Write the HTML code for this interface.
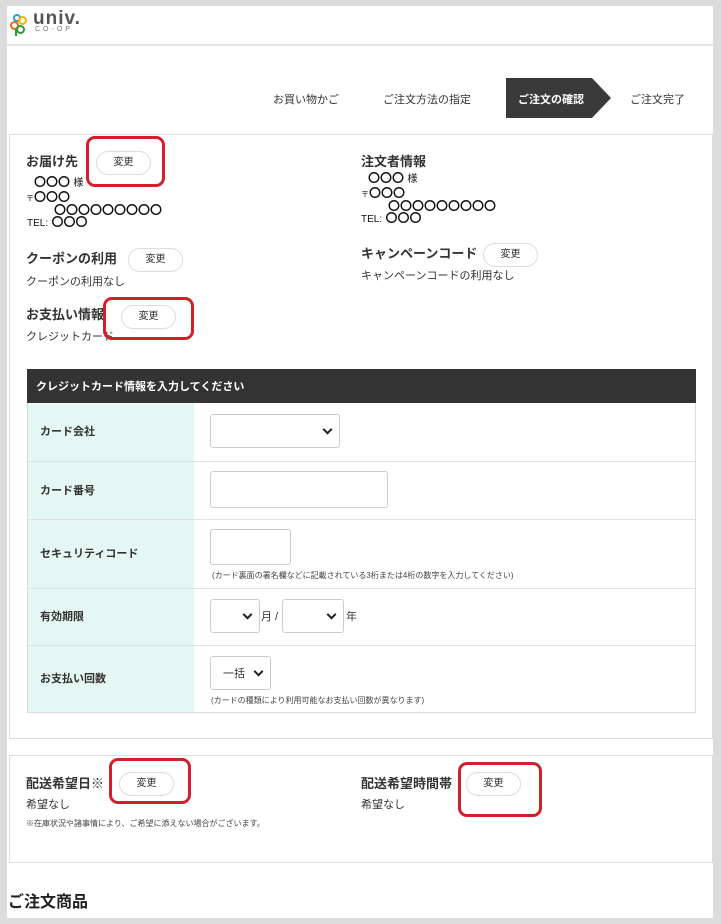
<!DOCTYPE html>
<html><head><meta charset="utf-8"><style>
*{margin:0;padding:0;box-sizing:border-box}
body{width:721px;height:924px;background:#dcdcdc;position:relative;overflow:hidden;font-family:"Liberation Sans","Noto Sans CJK JP",sans-serif;color:#333}
.a{position:absolute}
.page{left:7px;top:6px;width:706px;height:912px;background:#fff}
.b{font-weight:bold;font-size:13px;color:#333}
.t{font-size:11px;color:#333}
.btn{position:absolute;width:55px;height:24px;border:1px solid #ddd;border-radius:12px;background:#fff;font-size:10px;text-align:center;line-height:22px;color:#333}
.red{position:absolute;border:3px solid #d1202b;border-radius:9px}
.o{font-weight:bold;font-size:12px;line-height:12px;letter-spacing:0;color:#111}
.lab{position:absolute;left:28px;width:166px;background:#e4f7f3;font-size:11px;font-weight:bold;padding-left:12px;padding-bottom:2px;display:flex;align-items:center}
.row{position:absolute;left:28px;width:667px;border-top:1px solid #e2e2e2}
.in{position:absolute;border:1px solid #ccc;border-radius:3px;background:#fff}
.sel::after{content:"";position:absolute;right:8px;top:50%;width:5px;height:5px;border-right:2px solid #222;border-bottom:2px solid #222;transform:translateY(-70%) rotate(45deg)}
.note{position:absolute;font-size:8px;color:#444}
</style></head><body>
<div class="a page"></div>
<!-- logo -->
<div class="a" style="left:13px;top:14px;width:8px;height:8px;border:2px solid #2aa0d8;border-radius:50%"></div>
<div class="a" style="left:18px;top:16px;width:9px;height:9px;border:2px solid #f0b400;border-radius:50%"></div>
<div class="a" style="left:10px;top:21px;width:9px;height:9px;border:2px solid #e86a1c;border-radius:50%"></div>
<div class="a" style="left:16px;top:25px;width:9px;height:9px;border:2px solid #2e9a3c;border-radius:50%"></div>
<div class="a" style="left:15px;top:29px;width:2px;height:7px;background:#2e9a3c"></div>
<div class="a" style="left:33px;top:9px;font-size:19px;font-weight:bold;color:#555;letter-spacing:1px;line-height:19px">univ.</div>
<div class="a" style="left:35px;top:26px;font-size:7px;color:#777;letter-spacing:3px;line-height:8px">CO-OP</div>
<div class="a" style="left:7px;top:44px;width:706px;height:2px;background:#e6e6e6"></div>
<!-- steps -->
<div class="a t" style="left:273px;top:91px">お買い物かご</div>
<div class="a t" style="left:383px;top:91px">ご注文方法の指定</div>
<div class="a" style="left:506px;top:78px;width:86px;height:40px;background:#3a3a3a"></div>
<div class="a" style="left:592px;top:78px;width:0;height:0;border-top:20px solid transparent;border-bottom:20px solid transparent;border-left:19px solid #3a3a3a"></div>
<div class="a" style="left:518px;top:91px;font-size:11px;font-weight:bold;color:#fff">ご注文の確認</div>
<div class="a t" style="left:630px;top:91px">ご注文完了</div>
<!-- section 1 -->
<div class="a" style="left:9px;top:134px;width:704px;height:605px;border:1px solid #ddd"></div>
<div class="a b" style="left:26px;top:151px">お届け先</div>
<div class="btn" style="left:96px;top:151px">変更</div>
<div class="a o" style="left:34px;top:176px">〇〇〇 <span style="font-size:10px;font-weight:normal">様</span></div>
<div class="a o" style="left:26px;top:191px"><span style="font-size:8px;font-weight:normal">〒</span>〇〇〇</div>
<div class="a o" style="left:54px;top:204px">〇〇〇〇〇〇〇〇〇</div>
<div class="a o" style="left:27px;top:216px"><span style="font-size:10px;font-weight:normal">TEL:</span> 〇〇〇</div>
<div class="a b" style="left:361px;top:151px">注文者情報</div>
<div class="a o" style="left:368px;top:172px">〇〇〇 <span style="font-size:10px;font-weight:normal">様</span></div>
<div class="a o" style="left:361px;top:187px"><span style="font-size:8px;font-weight:normal">〒</span>〇〇〇</div>
<div class="a o" style="left:388px;top:200px">〇〇〇〇〇〇〇〇〇</div>
<div class="a o" style="left:361px;top:212px"><span style="font-size:10px;font-weight:normal">TEL:</span> 〇〇〇</div>
<div class="a b" style="left:26px;top:248px">クーポンの利用</div>
<div class="btn" style="left:128px;top:248px">変更</div>
<div class="a t" style="left:26px;top:273px">クーポンの利用なし</div>
<div class="a b" style="left:361px;top:243px">キャンペーンコード</div>
<div class="btn" style="left:483px;top:243px">変更</div>
<div class="a t" style="left:361px;top:267px">キャンペーンコードの利用なし</div>
<div class="a b" style="left:26px;top:304px">お支払い情報</div>
<div class="btn" style="left:121px;top:305px">変更</div>
<div class="a t" style="left:26px;top:328px">クレジットカード</div>
<!-- table -->
<div class="a" style="left:27px;top:369px;width:669px;height:344px;border:1px solid #ddd;border-top:none"></div>
<div class="a" style="left:27px;top:369px;width:669px;height:34px;background:#333;color:#fff;font-size:11px;font-weight:bold;padding:9px 0 0 9px">クレジットカード情報を入力してください</div>
<div class="lab" style="top:403px;height:58px">カード会社</div>
<div class="lab" style="top:461px;height:58px;border-top:1px solid #e2e2e2">カード番号</div>
<div class="lab" style="top:519px;height:69px;border-top:1px solid #e2e2e2">セキュリティコード</div>
<div class="lab" style="top:588px;height:57px;border-top:1px solid #e2e2e2">有効期限</div>
<div class="lab" style="top:645px;height:67px;border-top:1px solid #e2e2e2">お支払い回数</div>
<div class="row" style="top:461px"></div><div class="row" style="top:519px"></div><div class="row" style="top:588px"></div><div class="row" style="top:645px"></div>
<div class="in sel" style="left:210px;top:414px;width:130px;height:34px"></div>
<div class="in" style="left:210px;top:471px;width:178px;height:37px"></div>
<div class="in" style="left:210px;top:529px;width:81px;height:36px"></div>
<div class="note" style="left:212px;top:570px">(カード裏面の署名欄などに記載されている3桁または4桁の数字を入力してください)</div>
<div class="in sel" style="left:210px;top:599px;width:50px;height:34px"></div>
<div class="a t" style="left:261px;top:608px">月 /</div>
<div class="in sel" style="left:282px;top:599px;width:62px;height:34px"></div>
<div class="a t" style="left:346px;top:608px">年</div>
<div class="in sel" style="left:210px;top:656px;width:61px;height:34px"><span style="position:absolute;left:12px;top:8px;font-size:11px">一括</span></div>
<div class="note" style="left:211px;top:695px">(カードの種類により利用可能なお支払い回数が異なります)</div>
<!-- section 2 -->
<div class="a" style="left:9px;top:755px;width:704px;height:108px;border:1px solid #ddd"></div>
<div class="a b" style="left:26px;top:773px">配送希望日<span style="font-weight:normal">※</span></div>
<div class="btn" style="left:119px;top:772px">変更</div>
<div class="a t" style="left:26px;top:796px">希望なし</div>
<div class="note" style="left:26px;top:818px">※在庫状況や諸事情により、ご希望に添えない場合がございます。</div>
<div class="a b" style="left:361px;top:773px">配送希望時間帯</div>
<div class="btn" style="left:466px;top:772px">変更</div>
<div class="a t" style="left:361px;top:796px">希望なし</div>
<div class="a" style="left:8px;top:888px;font-size:16px;font-weight:bold;color:#222">ご注文商品</div>
<!-- red outlines -->
<div class="red" style="left:86px;top:136px;width:79px;height:51px"></div>
<div class="red" style="left:103px;top:297px;width:91px;height:43px"></div>
<div class="red" style="left:109px;top:758px;width:82px;height:46px"></div>
<div class="red" style="left:458px;top:762px;width:84px;height:55px"></div>
</body></html>
